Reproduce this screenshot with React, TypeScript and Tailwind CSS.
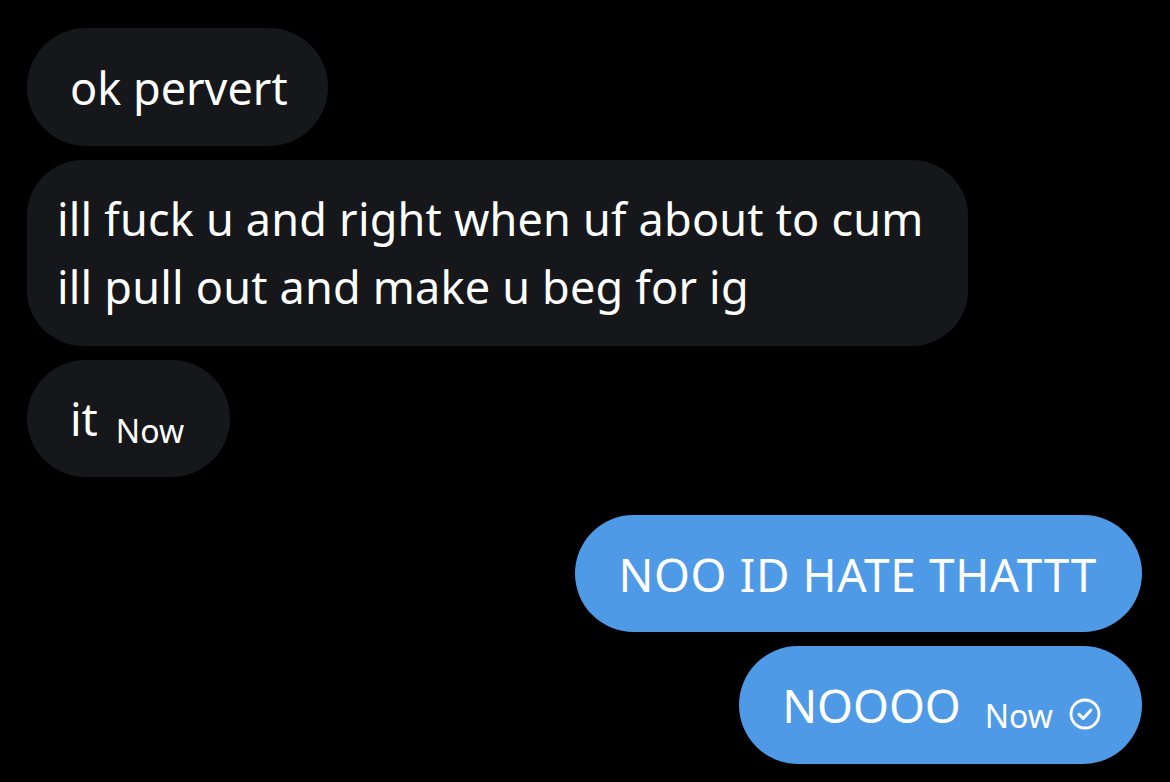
const font = { fontFamily: '"Noto Sans", "Open Sans", sans-serif' };

function CheckCircle() {
  return (
    <svg width="32" height="32" viewBox="0 0 32 32" fill="none" className="ml-[16px] mt-[18px] shrink-0">
      <circle cx="16" cy="16" r="14" stroke="white" strokeWidth="2.8" />
      <path d="M10 16.4l4.2 4 7.6-8.2" stroke="white" strokeWidth="3" strokeLinecap="round" strokeLinejoin="round" />
    </svg>
  );
}

function Incoming({ children, className = "" }: { children: React.ReactNode; className?: string }) {
  return (
    <div className={`self-start bg-[#16171a] text-white ${className}`}>{children}</div>
  );
}

function Outgoing({ children, className = "" }: { children: React.ReactNode; className?: string }) {
  return (
    <div className={`self-end bg-[#4e9ae6] text-white ${className}`}>{children}</div>
  );
}

export default function App() {
  return (
    <div className="w-[1170px] h-[782px] bg-black overflow-hidden" style={font}>
      <div className="flex flex-col pt-[28px] pl-[27px] pr-[28px]">
        <Incoming className="h-[118px] rounded-[59px] pl-[43px] pr-[40px] flex items-center text-[45px] leading-none">
          ok pervert
        </Incoming>

        <Incoming className="mt-[14px] rounded-[56px] pl-[30px] pr-[44px] py-[25px] text-[45px] leading-[68px] tracking-[0.2px]">
          <div>ill fuck u and right when uf about to cum</div>
          <div>ill pull out and make u beg for ig</div>
        </Incoming>

        <Incoming className="mt-[14px] h-[117px] rounded-[59px] pl-[43px] pr-[46px] flex items-center">
          <span className="text-[45px] leading-none">it</span>
          <span className="ml-[18px] mt-[24px] text-[32px] leading-none">Now</span>
        </Incoming>

        <Outgoing className="mt-[38px] h-[117px] rounded-[59px] pl-[44px] pr-[45px] flex items-center text-[46px] leading-none tracking-[0.6px]">
          NOO ID HATE THATTT
        </Outgoing>

        <Outgoing className="mt-[14px] h-[118px] rounded-[59px] pl-[43px] pr-[41px] flex items-center">
          <span className="text-[46px] leading-none">NOOOO</span>
          <span className="ml-[24px] mt-[22px] text-[32px] leading-none">Now</span>
          <CheckCircle />
        </Outgoing>
      </div>
    </div>
  );
}
